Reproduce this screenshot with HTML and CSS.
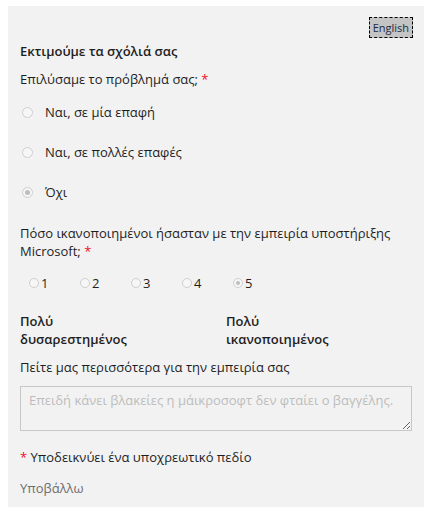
FILE: index.html
```html
<!DOCTYPE html>
<html lang="el">
<head>
<meta charset="utf-8">
<link rel="stylesheet" href="styles.css">
</head>
<body>
<div class="panel">
  <div class="topbar"><button class="lang">English</button></div>
  <h1 class="title">Εκτιμούμε τα σχόλιά σας</h1>
  <p class="question">Επιλύσαμε το πρόβλημά σας; <span class="req">*</span></p>
  <div class="options">
    <label class="option"><span class="radio"></span><span>Ναι, σε μία επαφή</span></label>
    <label class="option"><span class="radio"></span><span>Ναι, σε πολλές επαφές</span></label>
    <label class="option"><span class="radio checked"></span><span>Όχι</span></label>
  </div>
  <p class="question q2">Πόσο ικανοποιημένοι ήσασταν με την εμπειρία υποστήριξης Microsoft;&nbsp;<span class="req">*</span></p>
  <div class="rating">
    <label class="rate"><span class="radio small"></span>1</label>
    <label class="rate"><span class="radio small"></span>2</label>
    <label class="rate"><span class="radio small"></span>3</label>
    <label class="rate"><span class="radio small"></span>4</label>
    <label class="rate"><span class="radio small checked"></span>5</label>
  </div>
  <div class="scale">
    <div class="scale-label">Πολύ<br>δυσαρεστημένος</div>
    <div class="scale-label">Πολύ<br>ικανοποιημένος</div>
  </div>
  <p class="question more">Πείτε μας περισσότερα για την εμπειρία σας</p>
  <textarea class="comment" placeholder="Επειδή κάνει βλακείες η μάικροσοφτ δεν φταίει ο βαγγέλης."></textarea>
  <p class="note"><span class="req">*</span> Υποδεικνύει ένα υποχρεωτικό πεδίο</p>
  <div class="submit">Υποβάλλω</div>
</div>
</body>
</html>
```
FILE: styles.css
```css
html, body {
  margin: 0;
  padding: 0;
  background: #ffffff;
  overflow: hidden;
}
body {
  padding: 6px 0 0 8px;
  font-family: "Open Sans", "Noto Sans", sans-serif;
  font-size: 13px;
  color: #1e1e1e;
}
.panel {
  background: #f2f2f2;
  width: 430px;
  height: 501px;
  box-sizing: border-box;
  padding: 11px 0 0 12px;
}
.topbar {
  display: flex;
  justify-content: flex-end;
  padding-right: 25px;
  height: 21px;
}
.lang {
  font-family: inherit;
  font-size: 11px;
  color: #1a2a44;
  background: #c4c4c4;
  border: 1px dashed #000;
  padding: 0 3px;
  height: 21px;
  line-height: 18px;
  margin: 0;
}
.title {
  font-size: 13px;
  font-weight: 600;
  margin: 3px 0 0 0;
  line-height: 20px;
}
.question {
  margin: 9px 0 0 0;
  line-height: 18px;
}
.req { color: #e81123; }
.options {
  display: flex;
  flex-direction: column;
  gap: 20px;
  margin-top: 14px;
}
.option {
  display: flex;
  align-items: center;
  gap: 12px;
  line-height: 20px;
  padding-left: 2px;
}
.radio {
  width: 11px;
  height: 11px;
  border-radius: 50%;
  border: 1px solid #cfcfcf;
  background: #f6f6f6;
  box-sizing: border-box;
  display: flex;
  align-items: center;
  justify-content: center;
  flex: none;
}
.radio.checked::after {
  content: "";
  width: 5px;
  height: 5px;
  border-radius: 50%;
  background: #bdbdbd;
}
.radio.small { width: 10px; height: 10px; }
.radio.small.checked::after { width: 4px; height: 4px; }
.q2 { margin-top: 22px; }
.rating {
  display: flex;
  margin-top: 13px;
  padding-left: 9px;
  line-height: 20px;
}
.rate {
  display: flex;
  align-items: center;
  gap: 2px;
  width: 51px;
}
.scale {
  display: grid;
  grid-template-columns: 206px 1fr;
  margin-top: 19px;
  font-weight: 600;
  line-height: 18px;
}
.more { margin-top: 10px; }
.comment {
  display: block;
  margin: 10px 0 0 0;
  width: 392px;
  height: 45px;
  box-sizing: border-box;
  border: 1px solid #c8c8c8;
  background: #f2f2f2;
  font-family: inherit;
  font-size: 13px;
  padding: 4px 8px;
  color: #1e1e1e;
  resize: vertical;
}
.comment::placeholder { color: #bdbdbd; }
.note {
  margin: 16px 0 0 0;
  line-height: 20px;
}
.submit {
  margin-top: 11px;
  color: #6e6e6e;
  line-height: 20px;
}
```
